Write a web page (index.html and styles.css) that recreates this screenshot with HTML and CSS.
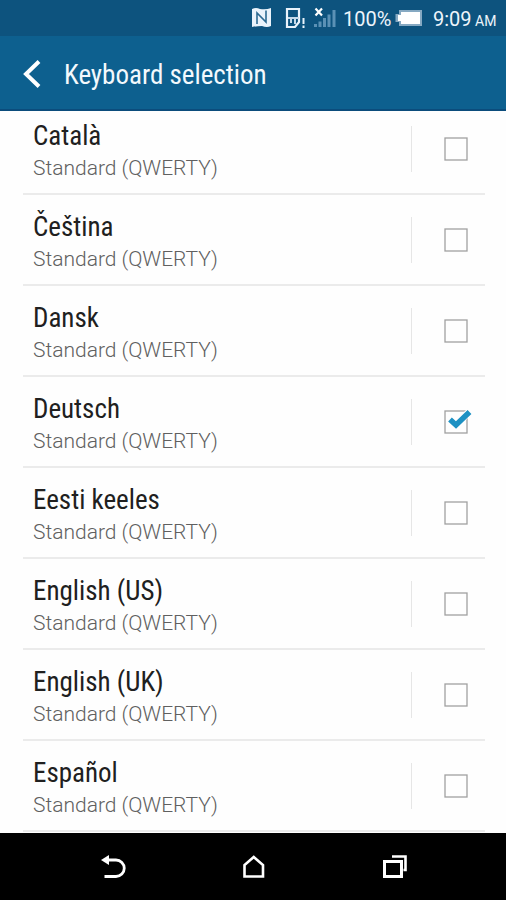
FILE: index.html
```
<!DOCTYPE html>
<html lang="en">
<head>
<meta charset="utf-8">
<title>Keyboard selection</title>
<link rel="stylesheet" href="styles.css">
</head>
<body>
<div class="phone">
  <div class="status">
    <svg class="status-icons" width="106" height="36" viewBox="0 0 106 36">
      <path d="M2 9Q6 7 10 9Q16 10 21 8V26Q17 28 12 26Q7 26 2 27Z" fill="#eaf3fb"/>
      <path d="M7 24V13L16 22V10.500" fill="none" stroke="#2c6a92" stroke-width="1.600"/>
      <path d="M37 9H49V22L45 27H37Z" fill="none" stroke="#eaf3fb" stroke-width="2.200"/>
      <path d="M38 18H49M41 18V23M45 18V24" stroke="#c5daea" stroke-width="2"/>
      <path d="M53.500 18V24M53.500 25.500V28" stroke="#eaf3fb" stroke-width="2"/>
      <path d="M65.500 8.500L72 15.500M72 8.500L65.500 15.500" stroke="#fff" stroke-width="2.200"/>
      <path d="M65.500 27V24M70 27V21.500M74.500 27V18M79 27V14.500M84 27V10" stroke="#5b91b5" stroke-width="3"/>
    </svg>
    <span class="percent">100%</span>
    <svg class="battery" width="30" height="36" viewBox="0 0 30 36">
      <path d="M4 10H27V26H4V22H.5V14H4Z" fill="#86a9c2"/>
      <path d="M6 12H25V24H6V21H3V15H6Z" fill="#fff"/>
    </svg>
    <span class="time">9:09</span><span class="ampm">AM</span>
  </div>
  <header class="header">
    <svg width="18" height="28" viewBox="0 0 18 28"><path d="M16 1.500L3 14L16 26.500" fill="none" stroke="#fff" stroke-width="4"/></svg>
    <h1>Keyboard selection</h1>
  </header>
  <main class="list" id="list"></main>
  <nav class="nav">
    <svg width="26" height="26" viewBox="0 0 26 26"><path d="M7 6H16A8 8 0 0 1 16 22.500H4.500" fill="none" stroke="#fff" stroke-width="2.800"/><path d="M1 6L9 1V11Z" fill="#fff"/></svg>
    <svg width="26" height="26" viewBox="0 0 26 26"><path d="M3.500 22.500V11L12.750 3L22 11V22.500Z" fill="none" stroke="#fff" stroke-width="2.600"/></svg>
    <svg width="26" height="26" viewBox="0 0 26 26"><path d="M2.500 7.500H19.500V22.500H2.500Z" fill="none" stroke="#fff" stroke-width="3"/><path d="M10 2.500H23.500V16H21.500" fill="none" stroke="#fff" stroke-width="2.600"/></svg>
  </nav>
</div>
<script src="script.js"></script>
</body>
</html>
```
FILE: styles.css
```
* { box-sizing: border-box; }
body {
  margin: 0;
  font-family: "Roboto Condensed", Roboto, sans-serif;
}
.phone {
  display: flex;
  flex-direction: column;
  width: 506px;
  height: 900px;
  overflow: hidden;
  background: #fefefe;
}
.status {
  display: flex;
  align-items: center;
  flex: 0 0 36px;
  padding-left: 250px;
  background: #0d537e;
  color: #edf5fb;
  font-family: Roboto, sans-serif;
  font-size: 20px;
  line-height: 28px;
  white-space: nowrap;
}
.status svg { flex: none; }
.status-icons { margin-right: -13px; }
.percent { width: 52px; padding-top: 2px; }
.battery { margin-right: 8px; }
.time { width: 42px; padding-top: 2px; }
.ampm { padding-top: 5px; font-size: 14px; }
.header {
  display: flex;
  align-items: center;
  gap: 22px;
  flex: 0 0 75px;
  padding: 2px 0 0 23px;
  background: #0d608f;
  border-bottom: 2px solid #0b4c7c;
  color: #f3f9fd;
}
h1 {
  margin: 0;
  padding: 3px 0 0 1px;
  font-size: 27px;
  font-weight: 400;
  font-stretch: 75%;
  line-height: 36px;
}
.list {
  flex: 0 0 722px;
  padding: 0 21px 0 23px;
  overflow: hidden;
}
.row {
  display: flex;
  align-items: center;
  height: 91px;
  padding-left: 10px;
  border-bottom: 2px solid #ebebeb;
}
.row:first-child { margin-top: -7px; }
.labels { flex: 0 0 378px; padding-top: 5px; }
.name {
  color: #202020;
  font-size: 27px;
  font-weight: 370;
  font-stretch: 75%;
  line-height: 34px;
}
.layout {
  color: #606060;
  font-family: Roboto, sans-serif;
  font-size: 21px;
  font-weight: 300;
  line-height: 30px;
}
.check {
  display: flex;
  align-items: center;
  height: 46px;
  padding-left: 32px;
  border-left: 1px solid #e6e6e6;
}
.check svg { display: block; overflow: visible; }
.nav {
  display: flex;
  align-items: center;
  justify-content: space-between;
  flex: 1;
  padding: 1px 98px 0 100px;
  background: #000;
}
```
FILE: script.js
```
const languages = ["Català", "Čeština", "Dansk", "Deutsch", "Eesti keeles", "English (US)", "English (UK)", "Español"];
const box = '<rect x="1" y="1" width="22" height="22" fill="none" stroke="#a0a0a0" stroke-width="1.300"/>';
const tick = '<path d="M6 9L12 15L25 2" fill="none" stroke="#fff" stroke-width="7"/><path d="M6 9.500L12 15L25.500 2" fill="none" stroke="#1d91c3" stroke-width="5.500"/>';
document.getElementById("list").innerHTML = languages.map(name =>
  `<div class="row"><div class="labels"><div class="name">${name}</div><div class="layout">Standard (QWERTY)</div></div><div class="check"><svg width="24" height="24" viewBox="0 0 24 24">${box}${name === "Deutsch" ? tick : ""}</svg></div></div>`
).join("");
```
